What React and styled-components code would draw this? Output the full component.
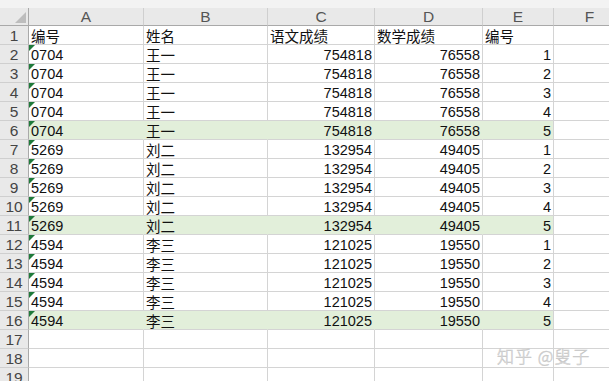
import React from "react";
import styled, { createGlobalStyle, css } from "styled-components";

const Global = createGlobalStyle`
  html, body { margin: 0; padding: 0; background: #fff; overflow: hidden; }
  body { font-family: "Liberation Sans", "Noto Sans CJK SC", sans-serif; }
`;

const Sheet = styled.div`
  position: relative;
  width: 609px;
  height: 381px;
  overflow: hidden;
  background: #fff;
`;

const TopStrip = styled.div`
  height: 8px;
  background: #f3f3f3;
`;

const Grid = styled.div`
  display: grid;
  grid-template-columns: 29px 115px 124px 107px 108px 71px 72px;
  grid-auto-rows: 19px;
  grid-template-rows: 18px;
  width: 626px;
`;

const ColHead = styled.div`
  box-sizing: border-box;
  background: #e9e9e9;
  border-right: 1px solid #cfcfcf;
  border-bottom: 1px solid #a9a9a9;
  color: #555;
  font-family: "Liberation Sans", sans-serif;
  font-size: 15.5px;
  display: flex;
  align-items: center;
  justify-content: center;
  line-height: 1;
  padding-top: 1px;
`;

const Corner = styled(ColHead)`
  position: relative;
  border-right: 1px solid #a9a9a9;
  &::after {
    content: "";
    position: absolute;
    right: 2px;
    bottom: 2px;
    width: 0;
    height: 0;
    border-left: 11px solid transparent;
    border-bottom: 11px solid #bdbdbd;
  }
`;

const RowHead = styled.div`
  box-sizing: border-box;
  background: #e9e9e9;
  border-right: 1px solid #a9a9a9;
  border-bottom: 1px solid #cfcfcf;
  color: #444;
  font-family: "Liberation Sans", sans-serif;
  font-size: 15.5px;
  display: flex;
  align-items: center;
  justify-content: center;
  padding-top: 2px;
`;

const Cell = styled.div`
  position: relative;
  box-sizing: border-box;
  border-right: 1px solid ${(p) => (p.$hl && !p.$last ? "#e2efda" : "#d4d4d4")};
  border-bottom: 1px solid #d4d4d4;
  background: ${(p) => (p.$hl ? "#e2efda" : "#fff")};
  color: #111;
  font-family: ${(p) =>
    p.$cjk ? '"Noto Sans CJK SC", sans-serif' : '"Liberation Sans", sans-serif'};
  font-size: ${(p) => (p.$cjk ? "14.5px" : "14.5px")};
  line-height: 18px;
  padding: 1px 2px 0 2px;
  text-align: ${(p) => (p.$right ? "right" : "left")};
  white-space: nowrap;
  overflow: hidden;
  ${(p) =>
    p.$flag &&
    css`
      &::before {
        content: "";
        position: absolute;
        left: 0;
        top: 0;
        width: 0;
        height: 0;
        border-top: 6px solid #1f7a3a;
        border-right: 6px solid transparent;
      }
    `}
`;

const Watermark = styled.div`
  position: absolute;
  left: 497px;
  top: 343px;
  font-family: "Noto Sans CJK SC", sans-serif;
  font-size: 17px;
  font-weight: 300;
  color: #f2f2f2;
  letter-spacing: 1px;
  -webkit-text-stroke: 0.5px #c4c4c4;
  white-space: nowrap;
`;

const groups = [
  { id: "0704", name: "王一", c: "754818", d: "76558" },
  { id: "5269", name: "刘二", c: "132954", d: "49405" },
  { id: "4594", name: "李三", c: "121025", d: "19550" },
];

const rows = [];
groups.forEach((g) => {
  for (let i = 1; i <= 5; i++) rows.push({ ...g, e: String(i), hl: i === 5 });
});

export default function App() {
  const cols = ["A", "B", "C", "D", "E", "F"];
  return (
    <>
      <Global />
      <Sheet>
        <TopStrip />
        <Grid>
          <Corner />
          {cols.map((c) => (
            <ColHead key={c}>{c}</ColHead>
          ))}

          <RowHead>1</RowHead>
          <Cell $cjk>编号</Cell>
          <Cell $cjk>姓名</Cell>
          <Cell $cjk>语文成绩</Cell>
          <Cell $cjk>数学成绩</Cell>
          <Cell $cjk>编号</Cell>
          <Cell />

          {rows.map((r, i) => (
            <React.Fragment key={i}>
              <RowHead>{i + 2}</RowHead>
              <Cell $flag $hl={r.hl}>{r.id}</Cell>
              <Cell $cjk $hl={r.hl}>{r.name}</Cell>
              <Cell $right $hl={r.hl}>{r.c}</Cell>
              <Cell $right $hl={r.hl}>{r.d}</Cell>
              <Cell $right $hl={r.hl} $last>{r.e}</Cell>
              <Cell />
            </React.Fragment>
          ))}

          {[17, 18, 19].map((n) => (
            <React.Fragment key={n}>
              <RowHead>{n}</RowHead>
              <Cell />
              <Cell />
              <Cell />
              <Cell />
              <Cell />
              <Cell />
            </React.Fragment>
          ))}
        </Grid>
        <Watermark>知乎 @叟子</Watermark>
      </Sheet>
    </>
  );
}
